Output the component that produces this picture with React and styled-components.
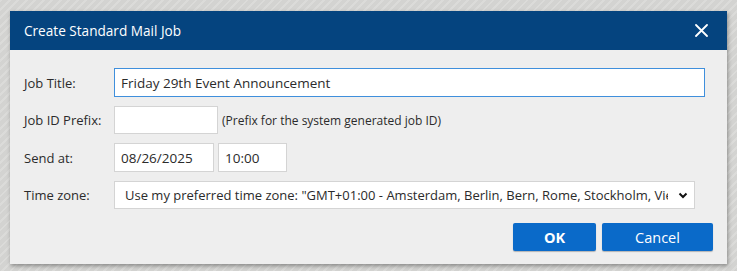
import React from 'react'
import styled, { createGlobalStyle } from 'styled-components'

const GlobalStyle = createGlobalStyle`
  html, body {
    margin: 0;
    padding: 0;
  }
  body {
    font-family: "Open Sans", "Noto Sans", Arial, sans-serif;
    background-color: #d3d3d1;
    background-image: repeating-linear-gradient(
      135deg,
      rgba(255, 255, 255, 0.18) 0px,
      rgba(255, 255, 255, 0.18) 2px,
      rgba(0, 0, 0, 0) 2px,
      rgba(0, 0, 0, 0) 6px
    );
    width: 737px;
    height: 271px;
    overflow: hidden;
  }
`

const Page = styled.div`
  padding: 11px 10px 0 10px;
`

const Dialog = styled.div`
  width: 717px;
  height: 253px;
  background: #eeeeee;
  box-shadow: 1px 2px 4px rgba(0, 0, 0, 0.35);
  display: flex;
  flex-direction: column;
`

const Header = styled.div`
  height: 39px;
  background: #05447f;
  display: flex;
  align-items: center;
  justify-content: space-between;
  padding: 0 18px 0 14px;
  color: #ffffff;
  font-size: 13.6px;
`

const Close = styled.button`
  border: 0;
  background: none;
  padding: 0;
  width: 16px;
  height: 16px;
  display: flex;
  align-items: center;
  justify-content: center;
  cursor: pointer;
`

const Body = styled.div`
  flex: 1;
  padding: 18px 14px 13px 14px;
  display: flex;
  flex-direction: column;
  gap: 9px;
`

const Row = styled.div`
  display: flex;
  align-items: center;
  gap: 4px;
  padding-right: ${p => p.$inset || 0}px;
`

const Label = styled.div`
  width: 86px;
  flex-shrink: 0;
  font-size: 13px;
  color: #2b2b2b;
`

const Input = styled.input`
  box-sizing: border-box;
  height: ${p => p.$h || 28}px;
  width: ${p => (p.$w ? `${p.$w}px` : 'auto')};
  flex: ${p => (p.$w ? '0 0 auto' : '1')};
  border: 1px solid ${p => (p.$focus ? '#3f8fdc' : '#d4d4d4')};
  background: #ffffff;
  padding: 0 6px;
  font-family: inherit;
  font-size: 13.5px;
  color: #2b2b2b;
  outline: none;
  border-radius: 0;
`

const Hint = styled.span`
  font-size: 12px;
  color: #2b2b2b;
`

const Select = styled.div`
  box-sizing: border-box;
  flex: 1;
  height: 28px;
  border: 1px solid #d4d4d4;
  background: #ffffff;
  display: flex;
  align-items: center;
  padding: 0 6px 0 10px;
  gap: 10px;
  font-size: 13px;
  color: #2b2b2b;
  overflow: hidden;
`

const SelectText = styled.span`
  flex: 1;
  white-space: nowrap;
  overflow: hidden;
`

const Actions = styled.div`
  display: flex;
  justify-content: flex-end;
  gap: 6px;
  margin-top: 5px;
`

const Button = styled.button`
  height: 28px;
  width: ${p => p.$w}px;
  border: 0;
  border-radius: 2px;
  background: #0a6ac9;
  color: #ffffff;
  font-family: inherit;
  font-size: 14.5px;
  font-weight: ${p => (p.$strong ? 700 : 400)};
  box-shadow: 0 1px 1px rgba(0, 0, 0, 0.25);
  cursor: pointer;
`

const App = () => {
  return (
    <>
      <GlobalStyle />
      <Page>
        <Dialog>
          <Header>
            <span>Create Standard Mail Job</span>
            <Close aria-label="Close">
              <svg width="13" height="13" viewBox="0 0 13 13">
                <path d="M1 1 L12 12 M12 1 L1 12" stroke="#ffffff" strokeWidth="1.8" strokeLinecap="round" />
              </svg>
            </Close>
          </Header>
          <Body>
            <Row $inset={8}>
              <Label>Job Title:</Label>
              <Input $h={29} $focus defaultValue="Friday 29th Event Announcement" />
            </Row>
            <Row>
              <Label>Job ID Prefix:</Label>
              <Input $w={104} />
              <Hint>(Prefix for the system generated job ID)</Hint>
            </Row>
            <Row>
              <Label>Send at:</Label>
              <Input $h={29} $w={100} defaultValue="08/26/2025" />
              <Input $h={29} $w={69} defaultValue="10:00" />
            </Row>
            <Row $inset={18}>
              <Label>Time zone:</Label>
              <Select>
                <SelectText>
                  Use my preferred time zone: "GMT+01:00 - Amsterdam, Berlin, Bern, Rome, Stockholm, Vienna"
                </SelectText>
                <svg width="10" height="7" viewBox="0 0 10 7">
                  <path d="M1.5 1.5 L5 5 L8.5 1.5" fill="none" stroke="#111111" strokeWidth="2" />
                </svg>
              </Select>
            </Row>
            <Actions>
              <Button $w={83} $strong>OK</Button>
              <Button $w={111}>Cancel</Button>
            </Actions>
          </Body>
        </Dialog>
      </Page>
    </>
  )
}

export default App
